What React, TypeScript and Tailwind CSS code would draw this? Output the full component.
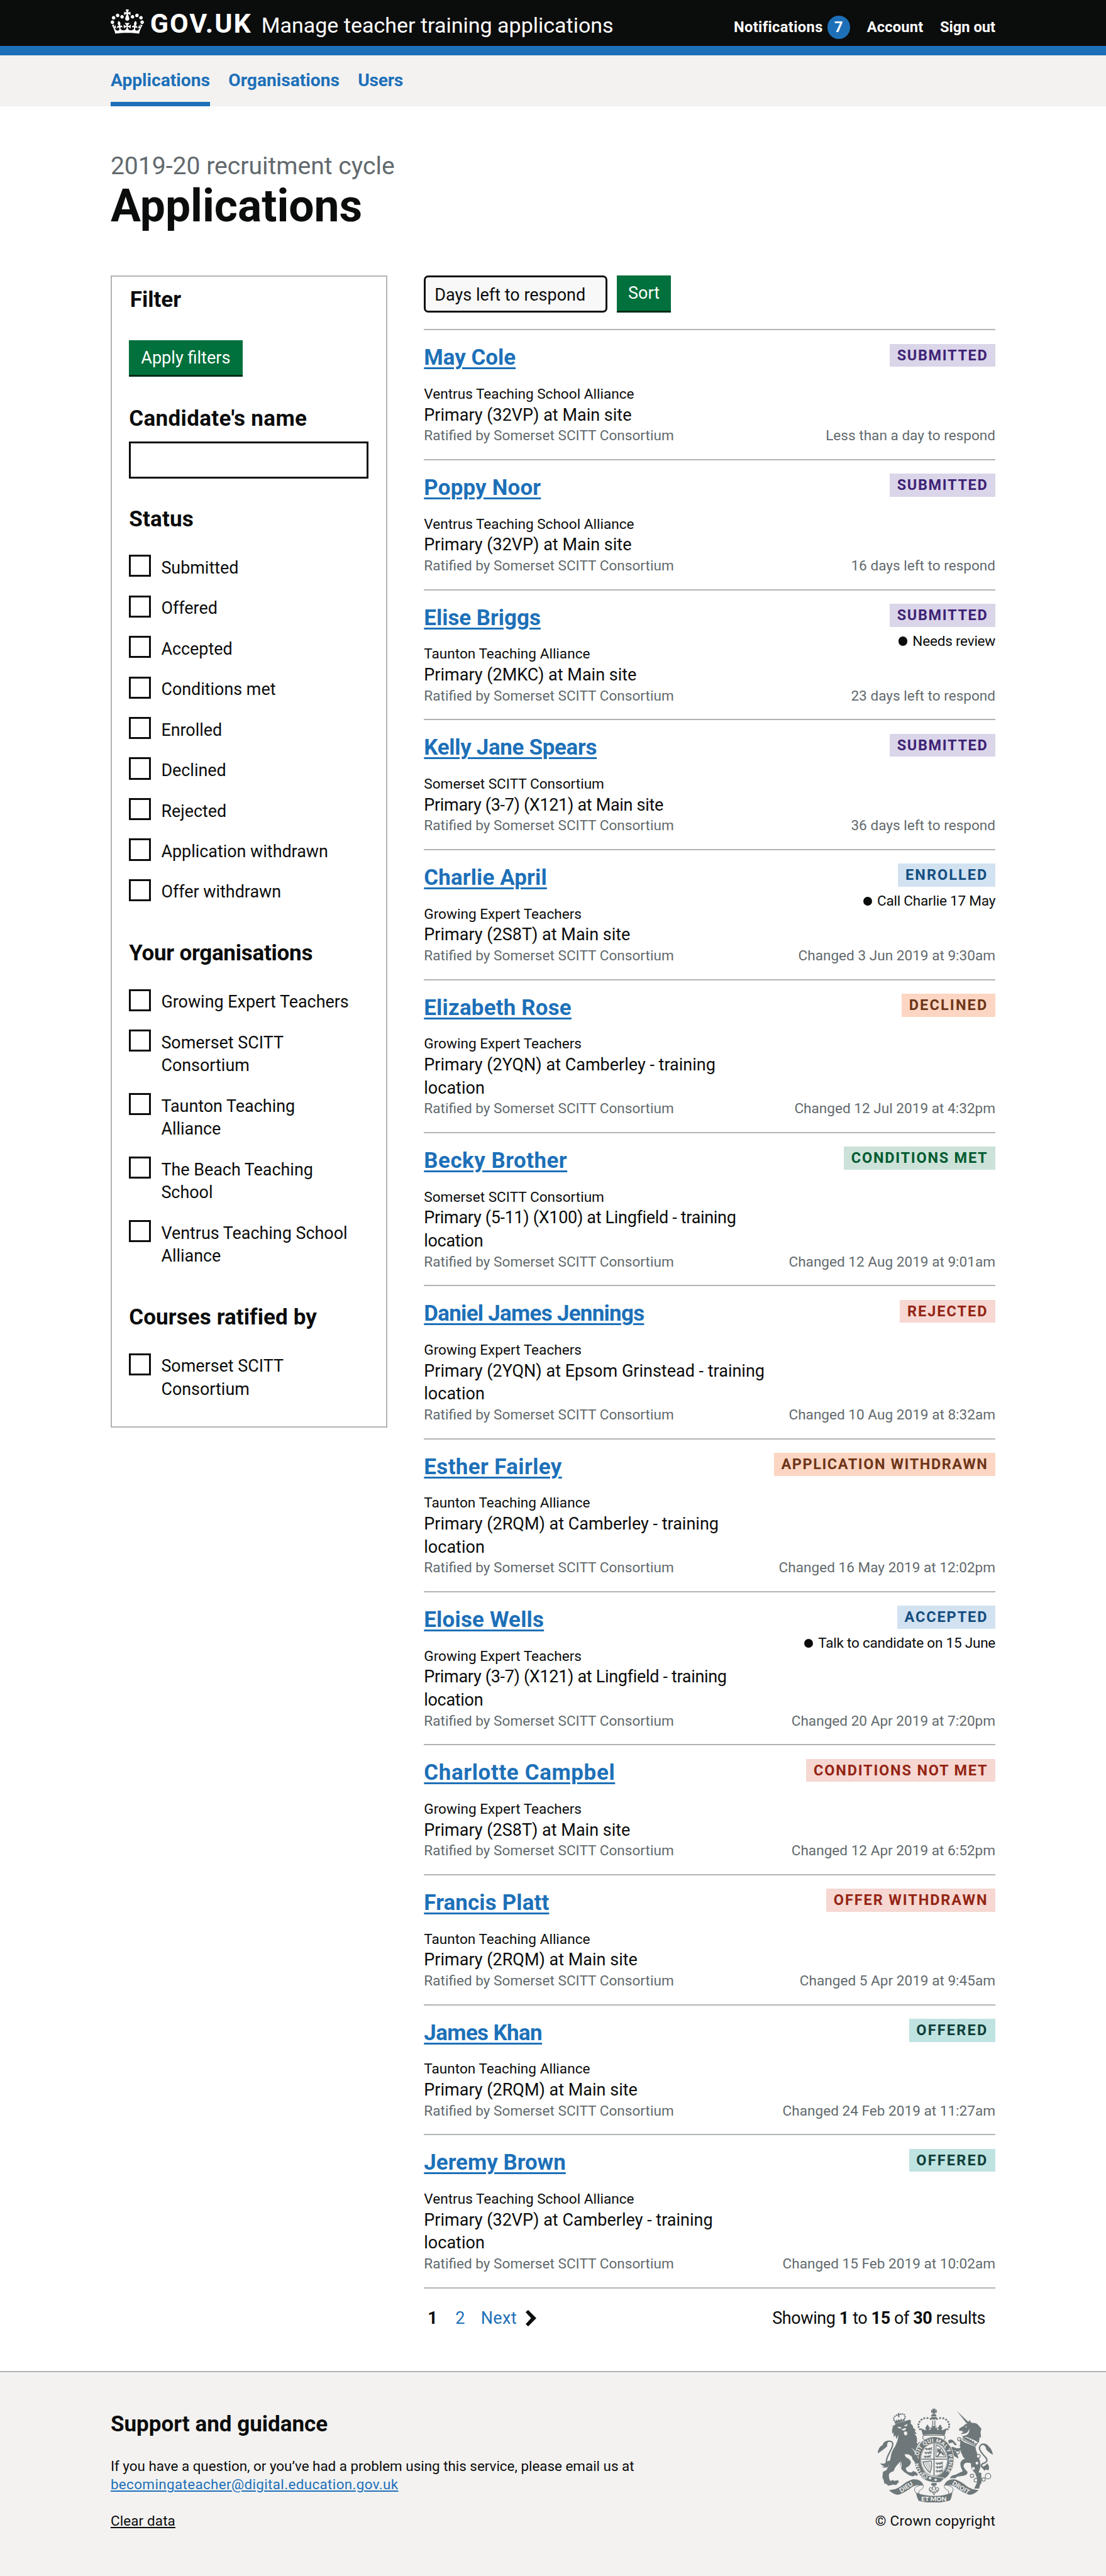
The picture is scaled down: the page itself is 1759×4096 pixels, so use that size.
import type { ReactNode } from "react";

type Tone = "purple" | "blue" | "orange" | "green" | "red" | "turquoise";

const TONES: Record<Tone, string> = {
  purple: "bg-[#dbd5e9] text-[#3d2375]",
  blue: "bg-[#d2e2f1] text-[#144e81]",
  orange: "bg-[#fcd6c3] text-[#6e3619]",
  green: "bg-[#cce2d8] text-[#005a30]",
  red: "bg-[#f6d7d2] text-[#942514]",
  turquoise: "bg-[#bfe3e0] text-[#10403c]",
};

const TAG_TRACKING: Record<string, string> = {
  Submitted: "tracking-[1.65px]",
  Enrolled: "tracking-[2.05px]",
  Declined: "tracking-[2.15px]",
  "Conditions met": "tracking-[1.75px]",
  Rejected: "tracking-[1.95px]",
  "Application withdrawn": "tracking-[1.55px]",
  Accepted: "tracking-[1.9px]",
  "Conditions not met": "tracking-[1.8px]",
  "Offer withdrawn": "tracking-[1.9px]",
  Offered: "tracking-[2.2px]",
};

const NAME_TRACKING: Record<string, string> = {
  "Poppy Noor": "tracking-[0.2px]",
  "Kelly Jane Spears": "tracking-[-0.3px]",
  "Charlie April": "tracking-[0.15px]",
  "Elizabeth Rose": "tracking-[0.2px]",
  "Becky Brother": "tracking-[0.5px]",
  "Daniel James Jennings": "tracking-[-0.7px]",
  "Esther Fairley": "tracking-[0.4px]",
  "Eloise Wells": "tracking-[0.2px]",
  "Charlotte Campbel": "tracking-[0.65px]",
  "Francis Platt": "tracking-[0.15px]",
  "James Khan": "tracking-[-0.6px]",
};

interface Application {
  name: string;
  provider: string;
  course: string;
  status: string;
  tone: Tone;
  when: string;
  note?: string;
}

const APPLICATIONS: Application[] = [
  { name: "May Cole", provider: "Ventrus Teaching School Alliance", course: "Primary (32VP) at Main site", status: "Submitted", tone: "purple", when: "Less than a day to respond" },
  { name: "Poppy Noor", provider: "Ventrus Teaching School Alliance", course: "Primary (32VP) at Main site", status: "Submitted", tone: "purple", when: "16 days left to respond" },
  { name: "Elise Briggs", provider: "Taunton Teaching Alliance", course: "Primary (2MKC) at Main site", status: "Submitted", tone: "purple", when: "23 days left to respond", note: "Needs review" },
  { name: "Kelly Jane Spears", provider: "Somerset SCITT Consortium", course: "Primary (3-7) (X121) at Main site", status: "Submitted", tone: "purple", when: "36 days left to respond" },
  { name: "Charlie April", provider: "Growing Expert Teachers", course: "Primary (2S8T) at Main site", status: "Enrolled", tone: "blue", when: "Changed 3 Jun 2019 at 9:30am", note: "Call Charlie 17 May" },
  { name: "Elizabeth Rose", provider: "Growing Expert Teachers", course: "Primary (2YQN) at Camberley - training location", status: "Declined", tone: "orange", when: "Changed 12 Jul 2019 at 4:32pm" },
  { name: "Becky Brother", provider: "Somerset SCITT Consortium", course: "Primary (5-11) (X100) at Lingfield - training location", status: "Conditions met", tone: "green", when: "Changed 12 Aug 2019 at 9:01am" },
  { name: "Daniel James Jennings", provider: "Growing Expert Teachers", course: "Primary (2YQN) at Epsom Grinstead - training location", status: "Rejected", tone: "red", when: "Changed 10 Aug 2019 at 8:32am" },
  { name: "Esther Fairley", provider: "Taunton Teaching Alliance", course: "Primary (2RQM) at Camberley - training location", status: "Application withdrawn", tone: "orange", when: "Changed 16 May 2019 at 12:02pm" },
  { name: "Eloise Wells", provider: "Growing Expert Teachers", course: "Primary (3-7) (X121) at Lingfield - training location", status: "Accepted", tone: "blue", when: "Changed 20 Apr 2019 at 7:20pm", note: "Talk to candidate on 15 June" },
  { name: "Charlotte Campbel", provider: "Growing Expert Teachers", course: "Primary (2S8T) at Main site", status: "Conditions not met", tone: "red", when: "Changed 12 Apr 2019 at 6:52pm" },
  { name: "Francis Platt", provider: "Taunton Teaching Alliance", course: "Primary (2RQM) at Main site", status: "Offer withdrawn", tone: "red", when: "Changed 5 Apr 2019 at 9:45am" },
  { name: "James Khan", provider: "Taunton Teaching Alliance", course: "Primary (2RQM) at Main site", status: "Offered", tone: "turquoise", when: "Changed 24 Feb 2019 at 11:27am" },
  { name: "Jeremy Brown", provider: "Ventrus Teaching School Alliance", course: "Primary (32VP) at Camberley - training location", status: "Offered", tone: "turquoise", when: "Changed 15 Feb 2019 at 10:02am" },
];

const STATUSES = [
  "Submitted",
  "Offered",
  "Accepted",
  "Conditions met",
  "Enrolled",
  "Declined",
  "Rejected",
  "Application withdrawn",
  "Offer withdrawn",
];

const ORGANISATIONS = [
  "Growing Expert Teachers",
  "Somerset SCITT Consortium",
  "Taunton Teaching Alliance",
  "The Beach Teaching School",
  "Ventrus Teaching School Alliance",
];

function Container({ children, className = "" }: { children: ReactNode; className?: string }) {
  return <div className={`mx-auto w-[1407.2px] ${className}`}>{children}</div>;
}

function Crown() {
  return (
    <svg viewBox="0 0 132 97" className="mt-[15.4px] h-[38.9px] w-[52.9px] shrink-0" fill="currentColor" aria-hidden="true">
      <path
        fillRule="evenodd"
        d="M25 30.2c3.5 1.5 7.7-.2 9.1-3.7 1.5-3.6-.2-7.8-3.9-9.2-3.6-1.4-7.6.3-9.1 3.9-1.4 3.5.3 7.5 3.9 9zM9 39.5c3.6 1.5 7.8-.2 9.2-3.7 1.5-3.6-.2-7.8-3.9-9.1-3.6-1.5-7.6.2-9.1 3.8-1.4 3.5.3 7.5 3.8 9zM4.4 57.2c3.5 1.5 7.7-.2 9.1-3.8 1.5-3.6-.2-7.7-3.9-9.1-3.5-1.5-7.6.3-9.1 3.8-1.4 3.5.3 7.6 3.9 9.1zm38.3-21.4c3.5 1.5 7.7-.2 9.1-3.8 1.5-3.6-.2-7.7-3.9-9.1-3.6-1.5-7.6.3-9.1 3.8-1.3 3.6.4 7.7 3.9 9.1zm64.4-5.6c-3.6 1.5-7.8-.2-9.1-3.7-1.5-3.6.2-7.8 3.8-9.2 3.6-1.4 7.7.3 9.2 3.9 1.3 3.5-.4 7.5-3.9 9zm15.9 9.3c-3.6 1.5-7.7-.2-9.1-3.7-1.5-3.6.2-7.8 3.7-9.1 3.6-1.5 7.7.2 9.2 3.8 1.5 3.5-.3 7.5-3.8 9zm4.7 17.7c-3.6 1.5-7.8-.2-9.2-3.8-1.5-3.6.2-7.7 3.9-9.1 3.6-1.5 7.7.3 9.2 3.8 1.3 3.5-.4 7.6-3.9 9.1zM89.3 35.8c-3.6 1.5-7.8-.2-9.2-3.8-1.4-3.6.2-7.7 3.9-9.1 3.6-1.5 7.7.3 9.2 3.8 1.4 3.6-.3 7.7-3.9 9.1zM69.7 17.7l8.9 4.7V9.3l-8.9 2.8c-.2-.3-.5-.6-.9-.9L72.4 0H59.6l3.5 11.2c-.3.3-.6.5-.9.9l-8.8-2.8v13.1l8.8-4.7c.3.3.6.7.9.9l-5 15.4v.1c-.2.8-.4 1.6-.4 2.4 0 4.1 3.1 7.5 7 8.1h.2c.3 0 .7.1 1 .1.4 0 .7 0 1-.1h.2c4-.6 7.1-4.1 7.1-8.1 0-.8-.1-1.7-.4-2.4V34l-5.1-15.4c.4-.2.7-.6 1-.9zM66 92.8c16.9 0 32.8 1.1 47.1 3.2 4-16.9 8.9-26.7 14-33.5l-9.6-3.4c1 4.9 1.1 7.2 0 10.2-1.5-1.4-3-4.3-4.2-8.7L108.6 76c2.8-2 5-3.2 7.5-3.3-4.4 9.4-10 11.9-13.6 11.2-4.3-.8-6.3-4.6-5.6-7.9 1-4.7 5.7-5.9 8-.5 4.3-8.7-3-11.4-7.6-8.8 7.1-7.2 7.9-13.5 2.1-21.1-8 6.1-8.1 12.3-4.5 20.8-4.7-5.4-12.1-2.5-9.5 6.2 3.4-5.2 7.9-2 7.2 3.1-.6 4.3-6.4 7.8-13.5 7.2-10.3-.9-10.9-8-11.2-13.8 2.5-.5 7.1 1.8 11 7.3L80.2 60c-4.1 4.4-8 5.3-12.3 5.4 1.4-4.4 8-11.6 8-11.6H55.5s6.4 7.2 7.9 11.6c-4.2-.1-8-1-12.3-5.4l1.4 16.4c3.9-5.5 8.5-7.7 10.9-7.3-.3 5.8-.9 12.8-11.1 13.8-7.2.6-12.9-2.9-13.5-7.2-.7-5 3.8-8.3 7.1-3.1 2.7-8.7-4.6-11.6-9.4-6.2 3.7-8.5 3.6-14.7-4.6-20.8-5.8 7.6-5 13.9 2.2 21.1-4.7-2.6-11.9.1-7.7 8.8 2.3-5.5 7.1-4.2 8.1.5.7 3.3-1.3 7.1-5.7 7.9-3.5.7-9-1.8-13.5-11.2 2.5.1 4.7 1.3 7.5 3.3l-4.7-15.4c-1.2 4.4-2.7 7.2-4.3 8.7-1.1-3-.9-5.3 0-10.2l-9.5 3.4c5 6.9 9.9 16.7 14 33.5 14.8-2.1 30.8-3.2 47.7-3.2z"
      />
    </svg>
  );
}

const ARCH_DOTS = [
  [477, 144],
  [456, 139],
  [435, 140],
  [417, 149],
  [404, 163],
  [397, 180],
  [398, 197],
  [407, 212],
];

const LION_CROWN_DOTS = [
  [238, 153],
  [236, 140],
  [243, 128],
  [254, 120],
  [280, 114],
  [293, 112],
  [305, 117],
  [310, 129],
  [308, 141],
];

function HalfCrown() {
  return (
    <g>
      {ARCH_DOTS.map(([x, y]) => (
        <circle key={`${x}-${y}`} cx={x} cy={y} r="6.6" />
      ))}
      <path d="M455 180q-10 12-8 20 3 6 6 6-2-8-9-7-6 3-2 10l7 2-8 8h30l-8-8 8-2q4-8-3-10-7 0-8 7 4 0 6-6 1-8-11-20z" />
      <path d="M411 205q12 2 16 10l4-8q4 8 2 16h-14z" />
    </g>
  );
}

function LionPassant({ x, y }: { x: number; y: number }) {
  return (
    <path
      transform={`translate(${x} ${y})`}
      stroke="#6e7779"
      strokeWidth="2"
      d="M0 4q4-8 10-4l6 1 20-3q10-8 14-2-6 0-7 6 5 2 4 9h-4l-1-5-8 0-4 6h-5l2-6-10 0-3 6H8l2-7-5-1z"
    />
  );
}

function RoyalArms() {
  return (
    <svg viewBox="132 78 750 612" className="h-[149.5px] w-[183.2px]" fill="#6e7779" aria-hidden="true">
      {/* Imperial crown */}
      <path d="M486 78h24l-7 12 13-7v23l-13-6 7 10h-24l7-10-13 6V83l13 7z" />
      <path d="M479 128q2-16 18-16t18 16z" />
      <path d="M478 132h38q-4 18-19 18t-19-18z" />
      <path d="M487 155h6v31h-6zM501 155h6v31h-6z" />
      <HalfCrown />
      <g transform="matrix(-1 0 0 1 994 0)">
        <HalfCrown />
      </g>
      <path d="M480 190h34l-10 14 14-6v24h-42v-24l14 6z" />
      <path d="M417 219q80-10 160 0l-9 31q-71-9-142 0z" />
      <rect x="425" y="252" width="145" height="26" rx="13" fill="#f3f2f1" stroke="#6e7779" strokeWidth="5" />

      {/* Lion */}
      {LION_CROWN_DOTS.map(([x, y]) => (
        <circle key={`${x}-${y}`} cx={x} cy={y} r="5" />
      ))}
      <path d="M262 108l12-2-3 8 8 2-8 5 4 12h-10l-1-11-8 0 7-6z" />
      <path d="M240 152l10 8 4-12 8 10 6-14 10 12 6-16 8 14 12-14 4 16-64 20z" />
      <path d="M238 188l14-14 88-24 8 6-2 18q16 12 18 30l18 14-11 2 16 24-16-4 14 20q6 22 1 38l6 10q8-16 20-16-24 22-32 52 12 12 14 30 8 20 8 36l4 6-6 14-24-8-18-14-4-18q-24-22-48-14l10 18q26 10 32 32-4 26-32 36-4 14 10 26l24 6 12-10 16 4 16 18-8 10-12-6-8 8-24-4-20-12q-34-18-44-48v-32l-18 20q-20 22-24 42-32 8-32 28 0 22 10 38l14-8 12 6 22-4 8 8-4 6-14 16-20-2-32 8-16-16-8 4-6-26-8-16 4-38 22-10q24-40 28-86 6-38 30-70 18-36 22-74l-15 28-6-26-10 12-4-32-7 12-1-24 6-26-9-6z" />
      <path fill="#f3f2f1" d="M262 196l26 4-8 7-14-2zM304 186l22-8-2 10-14 5zM284 214l32-12-2 12-12 6zM302 232q8-10 20-4 6 22-8 24-14-4-12-20zM280 418q6 20-4 48l8-2q10-24-4-46zM346 330q20 10 34 32l-6 2q-10-20-28-34z" />
      <path d="M230 398q-34 50-42 32-4-22 24-74 34-60 2-66-34-4-46 22" fill="none" stroke="#6e7779" strokeWidth="9" />
      <path d="M132 370q0-40 34-58 8-24 38-20-14 10-10 30-20 20-62 48zM148 432q26 12 46-12l26-6q-18 34-24 46l-36 2 14-10q-18-4-26-20z" />

      {/* Unicorn */}
      <path d="M647 93l78 74-12 9z" />
      <path d="M714 176l16-24 12 18q36-2 46 16l19 22-6 22 4 36-9-4-6 38-32-18-50-22-16 6-20-24 20-14-31-8 3-14 28-16q8-14 22-14z" />
      <path fill="#f3f2f1" d="M700 196l14-4-6 9zM672 242q50 4 56-36 6 46-44 50zM664 222l22-4-18 8z" />
      <path d="M690 254l-4 26 82 40 16-22" fill="none" stroke="#6e7779" strokeWidth="5" />
      <path d="M696 258l10 12 6-8 6 14 10-6 4 14 12-6 2 14 12-4 4 18 14-8-6 16-78-38z" />
      <path d="M680 290l88 36q2 22 12 46 24 50 20 86-4 18-12 34l18 4 2 64-10 14-6 24-32 0 10-22q10-14 10-38l-14-40q-32-30-26-64-40-14-48 10-8 14 24 44 4 20-24 26l-44 6-10 10-38 0 14-16 28-8 44-22q-18-28-16-52 6-24 30-28-14-10-18-26-12-22-12-32l-18 12-22-14-18 4-8 8-10-8 22-22 32 10 20-2z" />
      <path d="M590 286q20-14 34 0l24 26-14 4-14-18-24 6zM600 336l20 44 16 10 22 12-6-22-26-42zM662 276q14 20 2 44l20 14 10-40z" />
      <g fill="none" stroke="#6e7779" strokeWidth="5">
        <circle cx="663" cy="277" r="11" />
        <circle cx="652" cy="360" r="12" />
        <circle cx="746" cy="515" r="11" />
        <circle cx="771" cy="544" r="12" />
        <circle cx="821" cy="539" r="11" />
        <circle cx="850" cy="517" r="18" />
        <circle cx="787" cy="387" r="12" fill="#f3f2f1" />
      </g>
      <circle cx="778" cy="432" r="9" fill="#f3f2f1" />
      <circle cx="755" cy="467" r="9" fill="#f3f2f1" />
      <path d="M830 470q-40-20-12-36 40-12 16-40-40-40-40-60 4-30 36-24 14 4 22 18" fill="none" stroke="#6e7779" strokeWidth="9" />
      <path d="M882 378q-8-44-34-58-14-14-32-8 20 8 22 30 14 20 44 36zM804 450q20 12 40-16 18 16 10 44l-20-4-8 8z" />

      {/* Garter and shield */}
      <ellipse cx="499" cy="409" rx="129" ry="149" stroke="#f3f2f1" strokeWidth="4" />
      <ellipse cx="499" cy="409" rx="89" ry="109" fill="#f3f2f1" />
      <path id="garter-motto" fill="none" d="M432 506A100 119 0 1 1 572 492" />
      <text fill="#f3f2f1" className="font-['Lato'] text-[34px] font-black">
        <textPath href="#garter-motto" textLength="520" lengthAdjust="spacing">
          HONI SOIT QUI MAL Y PENSE
        </textPath>
      </text>
      <ellipse cx="499" cy="409" rx="86" ry="105" fill="none" stroke="#6e7779" strokeWidth="3" />
      <path d="M495 306h7v206h-7zM415 403h168v7H415z" />
      <LionPassant x={438} y={336} />
      <LionPassant x={434} y={361} />
      <LionPassant x={430} y={386} />
      <LionPassant x={508} y={430} />
      <LionPassant x={508} y={455} />
      <LionPassant x={508} y={480} />
      <path d="M511 314q46 14 64 78h-64z" fill="none" stroke="#6e7779" strokeWidth="5" />
      <path d="M520 334l14 8 10-8-2 16 18 16 6 18-12-4-8-12-8 4-10 16-16 0 14-12 4-16-12 2z" />
      <path d="M426 424l54-6q8 40-8 76-30-20-46-70z" fill="none" stroke="#6e7779" strokeWidth="6" />
      <path d="M438 426l32 58M450 424l24 48M462 424l14 34" stroke="#6e7779" strokeWidth="3" />
      <path d="M430 494q30 24 66 26 42 4 70 10l-24 26q-50 10-104-14z" stroke="#f3f2f1" strokeWidth="4" />
      <circle cx="437" cy="515" r="17" fill="none" stroke="#f3f2f1" strokeWidth="10" />
      <circle cx="437" cy="515" r="19" fill="none" stroke="#6e7779" strokeWidth="4" />
      <circle cx="473" cy="530" r="8" fill="#f3f2f1" />
      <circle cx="509" cy="541" r="8" fill="#f3f2f1" />
      <path d="M360 376l28 8 14 40-10 12-24-14z" />

      {/* Fleur-de-lis pendant */}
      <path d="M481 562h34v16h-34z" />
      <path
        d="M498 576q-16 20-6 34-4-20-18-18-12 6-4 20l10-4-4 12h44l-4-12 10 4q8-14-4-20-14-2-18 18 10-14-6-34zM488 620l10 18 10-18"
        fill="none"
        stroke="#6e7779"
        strokeWidth="5"
      />

      {/* Motto scroll */}
      <path d="M205 608q44-2 76-24 44-38 80-46 52-4 68 36-14 4-26 2-24-4-50 14-44 34-84 48-30 2-64-30z" />
      <path d="M789 608q-44-2-76-24-44-38-80-46-52-4-68 36 14 4 26 2 24-4 50 14 44 34 84 48 30 2 64-30z" />
      <path d="M386 632q-28-30-4-46 18-10 46-12 4 20-12 30-22 6-14 28" fill="none" stroke="#6e7779" strokeWidth="4" />
      <path d="M608 632q28-30 4-46-18-10-46-12-4 20 12 30 22 6 14 28" fill="none" stroke="#6e7779" strokeWidth="4" />
      <path d="M382 624q50 22 115 22t121-24q-4 34-16 54-50 14-105 14t-98-12q-14-22-17-54z" />
      <text fill="#f3f2f1" textAnchor="middle" className="font-['Lato'] text-[40px] font-black" transform="translate(324 600) rotate(-32)">
        DIEU
      </text>
      <text fill="#f3f2f1" textAnchor="middle" className="font-['Lato'] text-[40px] font-black" transform="translate(666 602) rotate(32)">
        DROIT
      </text>
      <text fill="#f3f2f1" textAnchor="middle" x="498" y="681" className="font-['Lato'] text-[42px] font-black">
        ET MON
      </text>
    </svg>
  );
}

function Header() {
  return (
    <header>
      <div className="h-[73.3px] bg-[#0b0c0c] text-white">
        <Container className="flex justify-between">
          <div className="flex">
            <Crown />
            <a className="mt-[14.6px] ml-[10px] w-[177px] text-[43px] leading-[44px] font-bold tracking-[2px]">GOV.UK</a>
            <a className="mt-[17.7px] text-[34px] leading-[44px] whitespace-nowrap">Manage teacher training applications</a>
          </div>
          <nav className="mt-[25px] flex h-[36.6px] items-center gap-[26.5px] text-[23.7px] leading-[30px] font-bold">
            <a className="flex items-center gap-[7px] tracking-[0.35px]">
              Notifications
              <span className="flex size-[36.6px] items-center justify-center rounded-full bg-[#1d70b8]">7</span>
            </a>
            <a className="tracking-[0.15px]">Account</a>
            <a>Sign out</a>
          </nav>
        </Container>
      </div>
      <div className="h-[14.7px] bg-[#1d70b8]" />
      <div className="h-[80.6px] bg-[#f3f2f1]">
        <Container className="flex h-full gap-[29.3px] text-[28.2px] leading-[36.6px] font-bold text-[#1d70b8]">
          <a className="border-b-[7px] border-[#1d70b8] pt-[22.4px]">Applications</a>
          <a className="pt-[22.4px]">Organisations</a>
          <a className="pt-[22.4px] tracking-[-0.3px]">Users</a>
        </Container>
      </div>
    </header>
  );
}

function FilterHeading({ children, className }: { children: ReactNode; className: string }) {
  return <h2 className={`text-[35px] leading-[36px] font-bold ${className}`}>{children}</h2>;
}

function Checkboxes({ items }: { items: string[] }) {
  return (
    <ul>
      {items.map((item) => (
        <li key={item} className="flex gap-[16px] pb-[25.2px]">
          <span className="size-[35.2px] shrink-0 border-[3px] border-[#0b0c0c] bg-white" />
          <span className="w-[304px] pt-[2.6px] text-[26.9px] leading-[36.65px]">{item}</span>
        </li>
      ))}
    </ul>
  );
}

function Filters() {
  return (
    <aside className="w-[439.8px] shrink-0 border-2 border-[#b1b4b6] px-[27.3px] pt-[18.7px] pb-[15px]">
      <FilterHeading className="pl-[1.5px]">Filter</FilterHeading>
      <button className="mt-[45.9px] block h-[58.6px] w-[180.3px] border-b-[3px] border-[#002d18] bg-[#00703c] text-[27.1px] leading-[56px] text-white">
        Apply filters
      </button>
      <FilterHeading className="mt-[48.2px] tracking-[0.35px]">Candidate's name</FilterHeading>
      <div className="mt-[18.4px] h-[58.6px] border-[3px] border-[#0b0c0c] bg-white" />
      <FilterHeading className="mt-[47.6px] mb-[38.1px] tracking-[0.2px]">Status</FilterHeading>
      <Checkboxes items={STATUSES} />
      <FilterHeading className="mt-[36.2px] mb-[38.1px] tracking-[-0.25px]">Your organisations</FilterHeading>
      <Checkboxes items={ORGANISATIONS} />
      <FilterHeading className="mt-[36.1px] mb-[38.1px] tracking-[0.1px]">Courses ratified by</FilterHeading>
      <Checkboxes items={["Somerset SCITT Consortium"]} />
    </aside>
  );
}

function ApplicationRow({ app }: { app: Application }) {
  return (
    <li className="flex justify-between border-t-2 border-[#b1b4b6] pb-[22.38px]">
      <div className="w-[550px] pt-[26px]">
        <h3 className={`text-[34.9px] leading-[36.65px] font-bold whitespace-nowrap ${NAME_TRACKING[app.name] ?? ""}`}>
          <a className="text-[#1d70b8] underline decoration-[2.6px] underline-offset-[3.8px]">{app.name}</a>
        </h3>
        <p className="mt-[24.2px] text-[22.6px] leading-[29.3px]">{app.provider}</p>
        <p className={`pt-[0.4px] text-[27px] leading-[36.65px] ${app.course.includes("(X") ? "tracking-[-0.32px]" : ""}`}>{app.course}</p>
        <p className="-mt-[0.2px] text-[22.6px] leading-[29.3px] text-[#626a6e]">Ratified by Somerset SCITT Consortium</p>
      </div>
      <div className="flex shrink-0 flex-col items-end pt-[21.5px]">
        <strong className={`px-[11.7px] text-[23.5px] leading-[36.6px] uppercase ${TAG_TRACKING[app.status]} ${TONES[app.tone]}`}>{app.status}</strong>
        {app.note && (
          <p className="mt-[8.4px] flex items-center gap-[8px] text-[22.6px] leading-[29.3px] tracking-[-0.25px]">
            <span className="size-[14.5px] rounded-full bg-[#0b0c0c]" />
            {app.note}
          </p>
        )}
        <p className="mt-auto text-[22.6px] leading-[29.3px] text-[#626a6e]">{app.when}</p>
      </div>
    </li>
  );
}

function Results() {
  return (
    <section className="w-[908.8px]">
      <div className="flex gap-[14.7px]">
        <div className="h-[58.6px] w-[291.7px] rounded-[7px] border-[3px] border-[#0b0c0c] bg-[#f8f8f8] pl-[14px] text-[27px] leading-[56px]">
          Days left to respond
        </div>
        <button className="h-[58.6px] w-[86.8px] border-b-[3px] border-[#002d18] bg-[#00703c] text-[27px] leading-[56px] text-white">Sort</button>
      </div>
      <ul className="mt-[26.4px] border-b-2 border-[#b1b4b6]">
        {APPLICATIONS.map((app) => (
          <ApplicationRow key={app.name} app={app} />
        ))}
      </ul>
      <div className="mt-[29.2px] flex justify-between pr-[16px] pl-[6px] text-[27px] leading-[36.65px]">
        <div className="flex">
          <b className="w-[44px]">1</b>
          <a className="w-[40.5px] text-[#1d70b8]">2</a>
          <a className="flex items-center gap-[14px] text-[#1d70b8]">
            <span className="tracking-[0.3px]">Next</span>
            <svg viewBox="0 0 17 26" className="h-[26px] w-[17px]" fill="#0b0c0c" aria-hidden="true">
              <path d="M0 3.4L4 0 17 13 4 26 0 22.6 8.6 13z" />
            </svg>
          </a>
        </div>
        <p className="tracking-[-0.42px]">
          Showing <b>1</b> to <b>15</b> of <b>30</b> results
        </p>
      </div>
    </section>
  );
}

function Footer() {
  return (
    <footer className="flex-1 border-t-2 border-[#b1b4b6] bg-[#f3f2f1]">
      <Container className="flex justify-between">
        <div className="pt-[65.4px]">
          <h2 className="text-[35px] leading-[36px] font-bold">Support and guidance</h2>
          <p className="mt-[33.2px] text-[22.4px] leading-[29.3px]">
            If you have a question, or you’ve had a problem using this service, please email us at
            <br />
            <a className="tracking-[0.38px] text-[#1d70b8] underline decoration-[1.5px] underline-offset-[2px]">
              becomingateacher@digital.education.gov.uk
            </a>
          </p>
          <p className="mt-[29.4px] text-[22.4px] leading-[29.3px]">
            <a className="tracking-[0.15px] underline decoration-[1.5px] underline-offset-[2px]">Clear data</a>
          </p>
        </div>
        <div className="flex flex-col items-center pt-[58px]">
          <RoyalArms />
          <p className="mt-[15px] text-[22.6px] leading-[29.3px] tracking-[0.25px]">© Crown copyright</p>
        </div>
      </Container>
    </footer>
  );
}

export default function App() {
  return (
    <div className="flex h-[4096px] w-[1759px] flex-col overflow-hidden bg-white font-['Roboto','Liberation_Sans',sans-serif] text-[#0b0c0c]">
      <Header />
      <main>
        <Container className="pt-[73.2px]">
          <p className="text-[39.1px] leading-[44px] text-[#626a6e]">2019-20 recruitment cycle</p>
          <h1 className="mt-[5.1px] text-[71.4px] leading-[73.3px] font-bold">Applications</h1>
          <div className="mt-[74.1px] mb-[65.5px] flex items-start justify-between">
            <Filters />
            <Results />
          </div>
        </Container>
      </main>
      <Footer />
    </div>
  );
}
